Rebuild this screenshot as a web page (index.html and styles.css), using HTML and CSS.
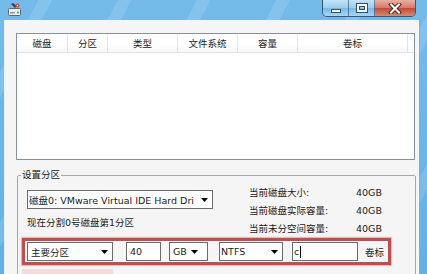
FILE: index.html
```html
<!DOCTYPE html>
<html>
<head>
<meta charset="utf-8">
<link rel="stylesheet" href="styles.css">
</head>
<body>
<div class="win">
  <div class="titlebar">
    <svg class="appicon" width="13" height="13" viewBox="0 0 13 13">
      <rect x="0.5" y="5.5" width="12" height="7" rx="1" fill="#e9eef2" stroke="#5b6670"/>
      <rect x="2" y="9" width="5" height="1.5" fill="#8a96a0"/>
      <circle cx="10" cy="9.5" r="1" fill="#3c9a3c"/>
      <path d="M3 1 L7 5 L9 3 L5 0 Z" fill="#3d4650"/>
      <circle cx="9.5" cy="2.5" r="2" fill="#d94c3a"/>
      <circle cx="9.5" cy="2.5" r="0.8" fill="#fff"/>
    </svg>
    <div class="caption-btns">
      <div class="cb min"><span class="g-min"></span></div>
      <div class="cb max"><span class="g-max"></span></div>
      <div class="cb close">
        <svg width="14" height="11" viewBox="0 0 14 11">
          <path d="M3 1.5 L11 9.5 M11 1.5 L3 9.5" stroke="#4a2a26" stroke-width="4" stroke-linecap="square"/>
          <path d="M3 1.5 L11 9.5 M11 1.5 L3 9.5" stroke="#ffffff" stroke-width="2" stroke-linecap="square"/>
        </svg>
      </div>
    </div>
  </div>
  <div class="frame">
    <div class="client">
      <div class="list">
        <div class="hdr">
          <div class="col c1">磁盘</div>
          <div class="col c2">分区</div>
          <div class="col c3">类型</div>
          <div class="col c4">文件系统</div>
          <div class="col c5">容量</div>
          <div class="col c6">卷标</div>
          <div class="col c7"></div>
        </div>
      </div>
      <fieldset class="group">
        <legend class="legend">设置分区</legend>
        <div class="top">
          <div class="left">
            <div class="combo w-disk"><span>磁盘0: VMware Virtual IDE Hard Dri</span><svg class="arrow" width="7" height="4" viewBox="0 0 7 4"><path d="M0 0 H7 L3.5 4 Z" fill="#000"/></svg></div>
            <div class="caption">现在分割0号磁盘第1分区</div>
          </div>
          <div class="info">
            <div class="row"><span class="lbl">当前磁盘大小:</span><span class="val">40GB</span></div>
            <div class="row"><span class="lbl">当前磁盘实际容量:</span><span class="val">40GB</span></div>
            <div class="row"><span class="lbl">当前未分空间容量:</span><span class="val">40GB</span></div>
          </div>
        </div>
        <div class="redbox">
          <div class="combo w-type"><span>主要分区</span><svg class="arrow" width="7" height="4" viewBox="0 0 7 4"><path d="M0 0 H7 L3.5 4 Z" fill="#000"/></svg></div>
          <div class="edit w-size">40</div>
          <div class="combo w-unit"><span>GB</span><svg class="arrow" width="7" height="4" viewBox="0 0 7 4"><path d="M0 0 H7 L3.5 4 Z" fill="#000"/></svg></div>
          <div class="combo w-fs"><span>NTFS</span><svg class="arrow" width="7" height="4" viewBox="0 0 7 4"><path d="M0 0 H7 L3.5 4 Z" fill="#000"/></svg></div>
          <div class="edit w-label"><span>c</span><span class="caret"></span></div>
          <span class="tail">卷标</span>
        </div>
        <div class="pinkstrip"></div>
      </fieldset>
    </div>
  </div>
</div>
</body>
</html>
```

FILE: styles.css
```css
* { box-sizing: border-box; }
html, body { margin: 0; padding: 0; }
body {
  width: 427px;
  height: 274px;
  overflow: hidden;
  font-family: "DejaVu Sans", "Noto Sans CJK SC", sans-serif;
  font-size: 9.5px;
  color: #1a1a1a;
  background: #6cb3e7;
}
.win {
  width: 427px;
  height: 274px;
  display: flex;
  flex-direction: column;
  background:
    repeating-linear-gradient(118deg, rgba(255,255,255,0) 0 34px, rgba(255,255,255,0.12) 34px 46px, rgba(255,255,255,0) 46px 70px),
    linear-gradient(180deg, #74bbea 0%, #64b0e5 100%);
}
.titlebar {
  height: 20px;
  display: flex;
  align-items: flex-start;
  flex: none;
}
.appicon {
  margin: 3px 0 0 8px;
}
.caption-btns {
  margin-left: auto;
  margin-right: 11px;
  display: flex;
  height: 17px;
  border: 1px solid rgba(28, 56, 86, 0.75);
  border-top: 0;
  border-radius: 0 0 5px 5px;
  overflow: hidden;
}
.cb {
  display: flex;
  align-items: center;
  justify-content: center;
  height: 100%;
}
.cb.min, .cb.max {
  width: 26px;
  border-right: 1px solid rgba(28, 56, 86, 0.55);
  background: linear-gradient(180deg, #c4e3f7 0%, #9dcdee 48%, #78b9e6 52%, #a6d6f3 100%);
}
.cb.close {
  width: 40px;
  background: linear-gradient(180deg, #e9b0a5 0%, #d77a68 48%, #c24a35 52%, #d98a74 100%);
}
.g-min {
  width: 10px;
  height: 4px;
  margin-top: 5px;
  background: #fff;
  border: 1px solid #34526e;
}
.g-max {
  width: 10px;
  height: 8px;
  border: 2px solid #fff;
  box-shadow: 0 0 0 1px #34526e, inset 0 0 0 1px #34526e;
}
.frame {
  flex: 1;
  display: flex;
  padding: 0 7px 0 4px;
  min-height: 0;
}
.client {
  flex: 1;
  background: #f6f5f5;
  border-left: 1px solid #e6f2fb;
  border-right: 1px solid #9aa8b6;
  padding: 13px 0 0 11px;
  overflow: hidden;
}
.list {
  width: 399px;
  height: 127px;
  border: 1px solid #8a8f96;
  background: #fff;
}
.hdr {
  display: flex;
  height: 19px;
  border-bottom: 1px solid #e3e6ea;
  background: linear-gradient(180deg, #ffffff 0%, #ffffff 60%, #f4f6f8 100%);
}
.col {
  height: 100%;
  border-right: 1px solid #e3e5e8;
  display: flex;
  align-items: center;
  justify-content: center;
  color: #222;
}
.c1 { width: 51px; }
.c2 { width: 40px; }
.c3 { width: 70px; }
.c4 { width: 60px; }
.c5 { width: 60px; }
.c6 { width: 110px; }
.c7 { flex: 1; border-right: 0; }

.group {
  margin: 8px 0 0 1px;
  width: 399px;
  padding: 0 0 20px 0;
  border: 1px solid #a7a7a7;
  border-radius: 2px;
  min-inline-size: 0;
}
.legend {
  margin-left: 3px;
  padding: 0 1px;
  line-height: 14px;
  color: #1a1a1a;
}
.top {
  display: flex;
  height: 56px;
  padding-left: 9px;
}
.left {
  width: 186px;
  display: flex;
  flex-direction: column;
  flex: none;
}
.combo, .edit {
  flex: none;
  height: 19px;
  background: #fff;
  border: 1px solid #6a6a6a;
  display: flex;
  align-items: center;
  padding: 0 4px 0 2px;
  white-space: nowrap;
  overflow: hidden;
}
.combo {
  justify-content: space-between;
}
.arrow { flex: none; }
.w-disk {
  margin-top: 8px;
  width: 186px;
  padding-left: 1px;
}
.caption {
  margin-top: 5px;
  line-height: 18px;
  white-space: nowrap;
}
.info {
  margin-left: 36px;
  padding-top: 2px;
}
.row {
  height: 18px;
  line-height: 18px;
  display: flex;
  white-space: nowrap;
}
.lbl { width: 107px; flex: none; }

.redbox {
  margin-left: 4px;
  width: 369px;
  height: 27px;
  border: 3px solid #bf4e4f;
  box-shadow: 0 0 1px 1px rgba(214, 120, 120, 0.45);
  display: flex;
  align-items: center;
  padding: 0 0 0 2px;
}
.w-type { width: 86px; padding-left: 3px; }
.w-size { width: 35px; margin-left: 13px; padding-left: 3px; }
.w-unit { width: 39px; margin-left: 8px; padding-left: 3px; padding-right: 9px; }
.w-fs { width: 64px; margin-left: 11px; padding-left: 1px; }
.w-label { width: 66px; margin-left: 9px; padding-left: 1px; }
.caret {
  width: 1px;
  height: 12px;
  margin-left: 1px;
  background: #000;
}
.tail {
  margin-left: 7px;
  white-space: nowrap;
  flex: none;
}
.pinkstrip {
  margin: 4px 0 0 4px;
  width: 91px;
  height: 8px;
  background: #f5dada;
}
```
